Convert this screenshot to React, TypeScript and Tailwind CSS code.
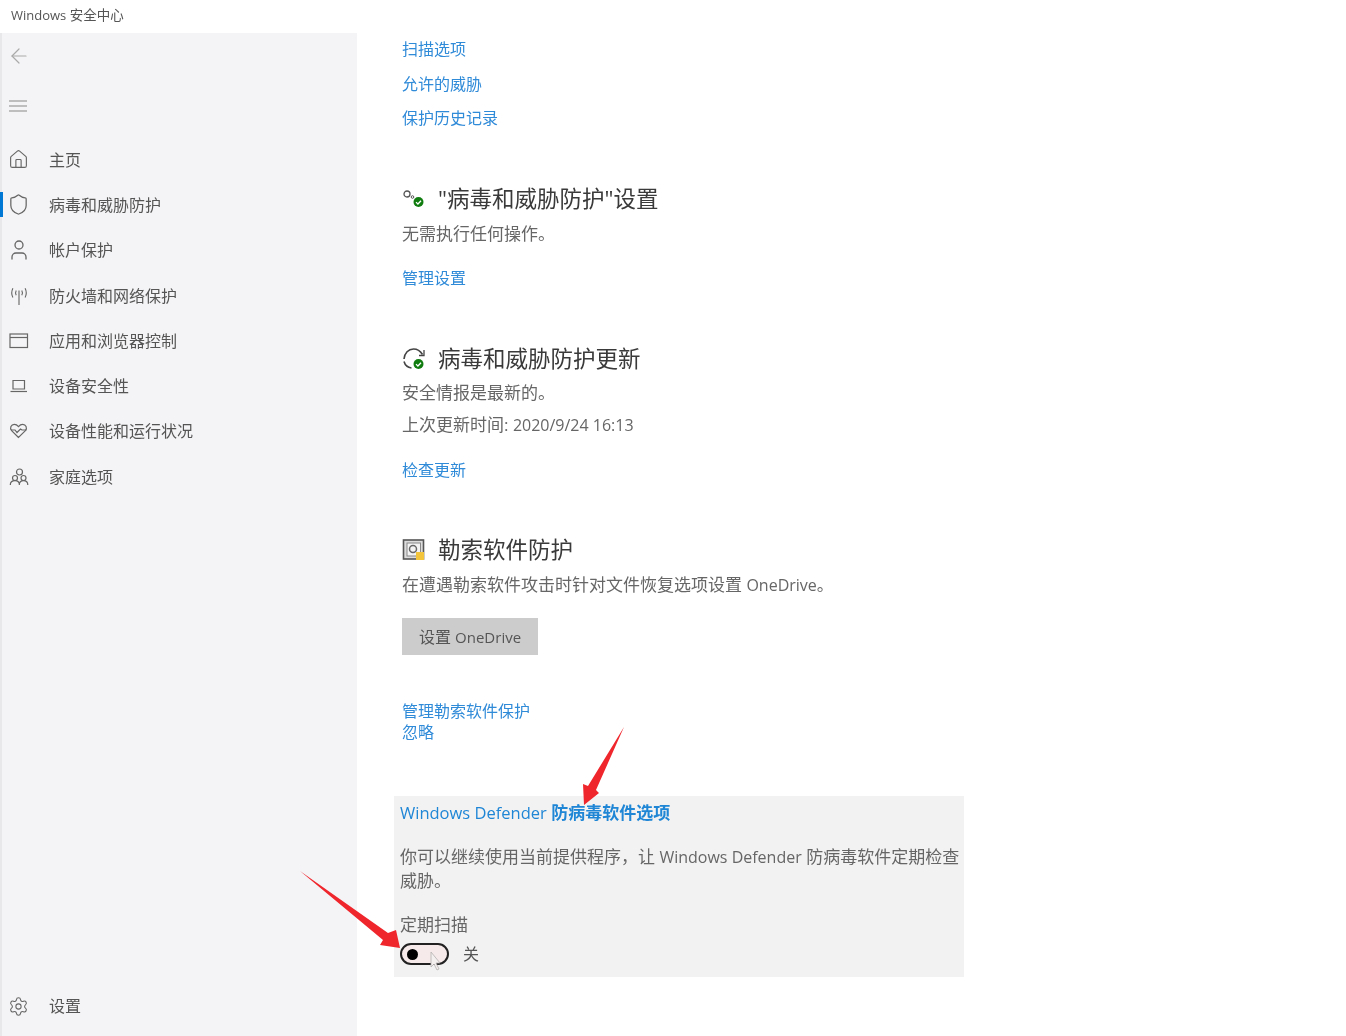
import { ArrowLeft, Home, Settings, Shield, User } from "lucide-react";
import type { ReactNode } from "react";

const font = "font-['Open_Sans','Noto_Sans_CJK_SC',sans-serif]";

function Antenna() {
  return (
    <svg width="20" height="20" viewBox="1 1 18 18" fill="none" stroke="currentColor" strokeWidth="1">
      <path d="M10 5v13" />
      <path d="M7.500 5c-.8 1.400-.8 3 0 4.400M12.500 5c.8 1.400.8 3 0 4.400" />
      <path d="M4.500 3c-1.400 2.800-1.400 5.600 0 8.400M15.500 3c1.400 2.800 1.400 5.600 0 8.400" />
    </svg>
  );
}

function Browser() {
  return (
    <svg width="20" height="20" viewBox="0 0 20 20" fill="none" stroke="currentColor" strokeWidth="1.200">
      <rect x="1" y="3" width="17.500" height="13.500" />
      <path d="M1 6.500h17.500" />
    </svg>
  );
}

function Laptop() {
  return (
    <svg width="20" height="20" viewBox="0 0 20 20" fill="none" stroke="currentColor" strokeWidth="1.200">
      <path d="M4 4.500h11.500v8.500H4z" />
      <path d="M1.500 15.500h16.500" />
    </svg>
  );
}

function HeartPulse() {
  return (
    <svg width="20" height="20" viewBox="0 0 20 20" fill="none" stroke="currentColor" strokeWidth="1.200">
      <path d="M9.500 16.500 2.600 9.600C.4 7.200 2.100 3.400 5.300 3.400c1.800 0 3.100.9 4.200 2.200 1.100-1.300 2.400-2.200 4.200-2.200 3.200 0 4.900 3.800 2.700 6.200z" />
      <path d="M2 9h4l2 2.500L11.500 8l1.500 1h4.500" />
    </svg>
  );
}

function Family() {
  return (
    <svg width="20" height="20" viewBox="0 0 20 20" fill="none" stroke="currentColor" strokeWidth="1.200">
      <circle cx="10.500" cy="5" r="3" />
      <circle cx="6" cy="11" r="2.500" />
      <circle cx="14.500" cy="11" r="2.500" />
      <path d="M1.300 18c0-2.800 2-4.300 4.700-4.300s4.400 1.500 4.400 4.300M10.300 18c0-2.800 1.800-4.300 4.200-4.300s4.300 1.500 4.300 4.300" />
    </svg>
  );
}

function SettingsStatus() {
  return (
    <svg width="24" height="24" viewBox="0 0 24 24" fill="none">
      <circle cx="5" cy="7" r="3" stroke="#555" strokeWidth="1.300" />
      <circle cx="10.500" cy="10" r="1.300" stroke="#555" strokeWidth="1" />
      <circle cx="16.500" cy="15" r="5" fill="#107c10" />
      <path d="M14 15.100l1.900 1.900 3.100-3.300" stroke="#fff" strokeWidth="1.300" />
    </svg>
  );
}

function UpdateStatus() {
  return (
    <svg width="24" height="24" viewBox="0 0 24 24" fill="none">
      <path d="M2 12C2.500 6 6.500 2 11.500 2c3.800 0 7 2.200 9 5.500" stroke="#444" strokeWidth="1.600" />
      <path d="M22 3v5.500h-5" stroke="#444" strokeWidth="1.300" />
      <path d="M2 14.500c1 3.500 3.800 6 7.500 6.500" stroke="#444" strokeWidth="1.600" />
      <circle cx="16.500" cy="17" r="5" fill="#107c10" />
      <path d="M14 17.100l1.900 1.900 3.100-3.300" stroke="#fff" strokeWidth="1.300" />
    </svg>
  );
}

function RansomStatus() {
  return (
    <svg width="24" height="24" viewBox="0 0 24 24" fill="none">
      <rect x="1.500" y="2" width="20" height="19" fill="#dcdcdc" stroke="#555" strokeWidth="1.600" />
      <rect x="5" y="5" width="13.500" height="13" fill="#f4f4f4" stroke="#888" />
      <circle cx="11" cy="11" r="3.500" stroke="#666" strokeWidth="1.500" />
      <rect x="14" y="14" width="8" height="8" fill="#f2c53d" />
    </svg>
  );
}

const navItems: { label: string; icon: ReactNode; active?: boolean }[] = [
  { label: "主页", icon: <Home size={21} strokeWidth={1.300} /> },
  { label: "病毒和威胁防护", icon: <Shield size={23} strokeWidth={1.300} />, active: true },
  { label: "帐户保护", icon: <User size={24} strokeWidth={1.300} /> },
  { label: "防火墙和网络保护", icon: <Antenna /> },
  { label: "应用和浏览器控制", icon: <Browser /> },
  { label: "设备安全性", icon: <Laptop /> },
  { label: "设备性能和运行状况", icon: <HeartPulse /> },
  { label: "家庭选项", icon: <Family /> },
];

function NavRow({ label, icon, active }: { label: string; icon: ReactNode; active?: boolean }) {
  return (
    <div className="relative flex h-[45.300px] items-center text-[16px] text-[#555]">
      {active && <span className="absolute left-0 top-[10px] h-[25px] w-[3px] bg-[#0078d4]" />}
      <span className="flex w-[49px] justify-center pr-[12px] text-[#666]">{icon}</span>
      <span>{label}</span>
    </div>
  );
}

function TextLink({ children, className = "" }: { children: ReactNode; className?: string }) {
  return <div className={`h-[24px] text-[16px] leading-[24px] text-[#2f8ad8] ${className}`}>{children}</div>;
}

function Heading({ icon, children, className = "" }: { icon: ReactNode; children: ReactNode; className?: string }) {
  return (
    <div className={`flex h-[32px] items-center text-[22.500px] text-[#3a3a3a] ${className}`}>
      <span className="w-[36px]">{icon}</span>
      <span>{children}</span>
    </div>
  );
}

function Body({ children, className = "" }: { children: ReactNode; className?: string }) {
  return <div className={`h-[24px] text-[17px] leading-[24px] text-[#666] ${className}`}>{children}</div>;
}

function Latin({ children, className = "text-[16px]" }: { children: ReactNode; className?: string }) {
  return <span className={className}>{children}</span>;
}

export default function App() {
  return (
    <div className={`relative flex h-[1036px] flex-col overflow-hidden bg-white blur-[0.5px] ${font}`}>
      <div className="flex h-[33px] shrink-0 items-center pb-[2px] pl-[11px] text-[13.500px] text-[#555]">
        <span>
          <Latin className="text-[13px]">Windows</Latin> 安全中心
        </span>
      </div>

      <div className="flex flex-1">
        <aside className="flex w-[357px] shrink-0 flex-col border-l-2 border-[#e8e8ea] bg-[#f4f4f6] pb-[7px]">
          <div className="flex h-[45px] items-center pl-[5px] text-[#aaa]">
            <ArrowLeft size={24} strokeWidth={1.200} />
          </div>
          <div className="mt-[5px] flex h-[45px] items-center pl-[7px]">
            <svg width="18" height="12" viewBox="0 0 18 12" stroke="#888" strokeWidth="1">
              <path d="M0 1h18M0 6h18M0 11h18" />
            </svg>
          </div>
          <nav className="mt-[9px] -ml-[2px]">
            {navItems.map((item) => (
              <NavRow key={item.label} {...item} />
            ))}
          </nav>
          <div className="mt-auto -ml-[2px]">
            <NavRow label="设置" icon={<Settings size={21} strokeWidth={1.200} />} />
          </div>
        </aside>

        <main className="flex-1 pl-[45px] pt-[4px]">
          <TextLink>扫描选项</TextLink>
          <TextLink className="mt-[11px]">允许的威胁</TextLink>
          <TextLink className="mt-[10px]">保护历史记录</TextLink>

          <Heading className="mt-[53px]" icon={<SettingsStatus />}>
            "病毒和威胁防护"设置
          </Heading>
          <Body className="mt-[7px]">无需执行任何操作。</Body>
          <TextLink className="mt-[20px]">管理设置</TextLink>

          <Heading className="mt-[53px]" icon={<UpdateStatus />}>
            病毒和威胁防护更新
          </Heading>
          <Body className="mt-[6px]">安全情报是最新的。</Body>
          <Body className="mt-[8px]">
            上次更新时间: <Latin>2020/9/24 16:13</Latin>
          </Body>
          <TextLink className="mt-[21px]">检查更新</TextLink>

          <Heading className="mt-[52px]" icon={<RansomStatus />}>
            勒索软件防护
          </Heading>
          <Body className="mt-[7px]">
            在遭遇勒索软件攻击时针对文件恢复选项设置 <Latin>OneDrive</Latin>。
          </Body>
          <button className="mt-[21px] block h-[37px] w-[136px] bg-[#cccccc] text-[16px] text-[#555]">
            设置 <Latin className="text-[15px]">OneDrive</Latin>
          </button>

          <div className="mt-[46px] h-[20px] text-[16px] leading-[20px] text-[#2f8ad8]">管理勒索软件保护</div>
          <div className="h-[22px] text-[16px] leading-[22px] text-[#2f8ad8]">忽略</div>

          <section className="mt-[53px] -ml-[8px] h-[181px] w-[570px] bg-[#f2f2f2] pl-[6px] pt-[5px] text-[17px]">
            <div className="h-[24px] leading-[24px] text-[#1f86d6]">
              <Latin className="text-[16.500px]">Windows Defender</Latin>{" "}
              <span className="font-bold">防病毒软件选项</span>
            </div>
            <p className="mt-[20px] leading-[23px] text-[#666]">
              你可以继续使用当前提供程序，让 <Latin>Windows Defender</Latin> 防病毒软件定期检查威胁。
            </p>
            <div className="mt-[21px] h-[24px] leading-[24px] text-[#666]">定期扫描</div>
            <div className="mt-[6px] flex h-[22px] items-center">
              <span className="flex h-[22px] w-[49px] items-center rounded-full border-2 border-[#222] bg-[#f6eaea] pl-[5px]">
                <span className="h-[11px] w-[11px] rounded-full bg-black" />
              </span>
              <span className="ml-[14px] text-[16px] text-[#555]">关</span>
            </div>
          </section>
        </main>
      </div>

      {/* annotation arrows + cursor lie over the page */}
      <svg className="pointer-events-none absolute inset-0" width="1346" height="1036" viewBox="0 0 1346 1036">
        <polygon points="624,727 596,790 599,793 584,805 583,784 588,786" fill="#f0262d" />
        <polygon points="300,871 388,933 396,930 400,948 380,945 383,940" fill="#f0262d" />
        <path d="M431 952l0 15 3-3 3 6 2-1-3-6 4 0z" fill="#f4f0f0" stroke="#b5b0b0" strokeWidth="0.800" />
      </svg>
    </div>
  );
}
